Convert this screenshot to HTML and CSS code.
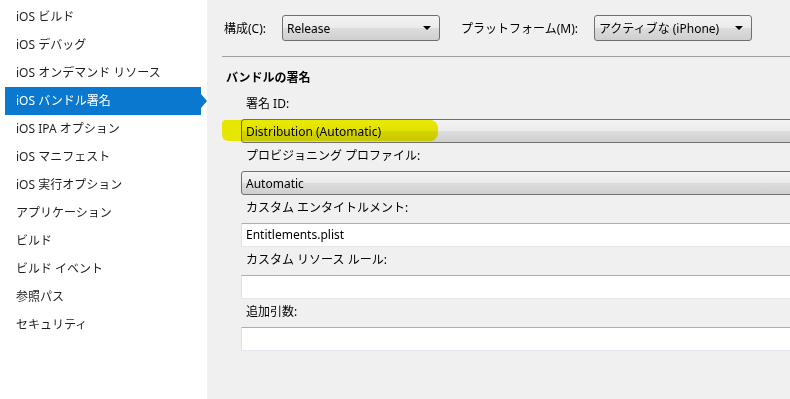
FILE: index.html
```html
<html>
	<head>
		<link rel="stylesheet" href="styles.css">
	</head>
	<body>
		<div class="window">
			<ul class="nav">
				<li>iOS ビルド</li>
				<li>iOS デバッグ</li>
				<li>iOS オンデマンド リソース</li>
				<li class="active">iOS バンドル署名</li>
				<li>iOS IPA オプション</li>
				<li>iOS マニフェスト</li>
				<li>iOS 実行オプション</li>
				<li>アプリケーション</li>
				<li>ビルド</li>
				<li>ビルド イベント</li>
				<li>参照パス</li>
				<li>セキュリティ</li>
			</ul>
			<div class="panel">
				<div class="toolbar">
					<span class="lbl">構成(C):</span>
					<div class="combo small"><span>Release</span><i class="caret"></i></div>
					<span class="lbl platform">プラットフォーム(M):</span>
					<div class="combo small"><span>アクティブな (iPhone)</span><i class="caret"></i></div>
				</div>
				<hr class="divider"/>
				<h2>バンドルの署名</h2>
				<div class="fields">
					<div class="field">
						<label>署名 ID:</label>
						<div class="combo wide">Distribution (Automatic)</div>
						<div class="marker"></div>
					</div>
					<div class="field">
						<label>プロビジョニング プロファイル:</label>
						<div class="combo wide">Automatic</div>
					</div>
					<div class="field">
						<label>カスタム エンタイトルメント:</label>
						<div class="text">Entitlements.plist</div>
					</div>
					<div class="field">
						<label>カスタム リソース ルール:</label>
						<div class="text"></div>
					</div>
					<div class="field">
						<label>追加引数:</label>
						<div class="text"></div>
					</div>
				</div>
			</div>
		</div>
	</body>
</html>
```

FILE: styles.css
```css
body {
	margin: 0;
	font-family: "Noto Sans", "Noto Sans CJK JP", sans-serif;
	font-size: 12px;
	color: #000;
	background-color: #f0f0f0;
}
.window {
	display: flex;
	height: 399px;
}
.nav {
	flex: none;
	width: 207px;
	margin: 0;
	padding: 3px 0 0;
	list-style: none;
	background-color: #fff;
}
.nav li {
	position: relative;
	height: 28px;
	line-height: 28px;
	margin: 0 6px 0 5px;
	padding-left: 11px;
	color: #1e1e1e;
	white-space: nowrap;
}
.nav li.active {
	background-color: #0b78d0;
	color: #fff;
}
.nav li.active:after {
	content: "";
	position: absolute;
	right: -6px;
	top: 7px;
	border-left: 6px solid #0b78d0;
	border-top: 7px solid transparent;
	border-bottom: 7px solid transparent;
}
.panel {
	flex: 1;
	overflow: hidden;
	padding: 15px 0 0 15px;
}
.toolbar {
	display: flex;
	align-items: center;
	height: 26px;
	padding-left: 2px;
	white-space: nowrap;
}
.lbl { margin-right: 16px }
.lbl.platform { margin-left: 21px }
.combo {
	display: flex;
	align-items: center;
	box-sizing: border-box;
	height: 24px;
	padding: 0 4px;
	border: 1px solid #707070;
	border-radius: 3px;
	background: linear-gradient(#f3f3f3, #ebebeb 50%, #dddddd 50%, #cfcfcf);
	white-space: nowrap;
}
.combo.small {
	flex: none;
	width: 158px;
	height: 26px;
	justify-content: space-between;
}
.caret {
	border-top: 4px solid #000;
	border-left: 4px solid transparent;
	border-right: 4px solid transparent;
	margin-right: 4px;
}
.divider {
	margin: 15px 0 0;
	border: 0;
	border-top: 1px solid #a0a0a0;
}
h2 {
	margin: 13px 0 0 4px;
	font-size: 12px;
	font-weight: bold;
	line-height: 16px;
}
.fields {
	margin-top: 10px;
	padding-left: 19px;
}
.field {
	position: relative;
	margin-bottom: 5px;
}
.field label {
	display: block;
	line-height: 16px;
	padding-left: 5px;
	margin-bottom: 7px;
}
.combo.wide, .text { width: 600px }
.text {
	box-sizing: border-box;
	height: 24px;
	line-height: 22px;
	padding-left: 4px;
	background-color: #fff;
	border-top: 1px solid #abadb3;
	border-left: 1px solid #dbdfe6;
	border-bottom: 1px solid #e3e9ef;
}
.marker {
	position: absolute;
	left: -19px;
	top: 24px;
	width: 216px;
	height: 21px;
	background-color: #f5f500;
	mix-blend-mode: multiply;
	border-radius: 4px 8px 8px 6px;
}
```
